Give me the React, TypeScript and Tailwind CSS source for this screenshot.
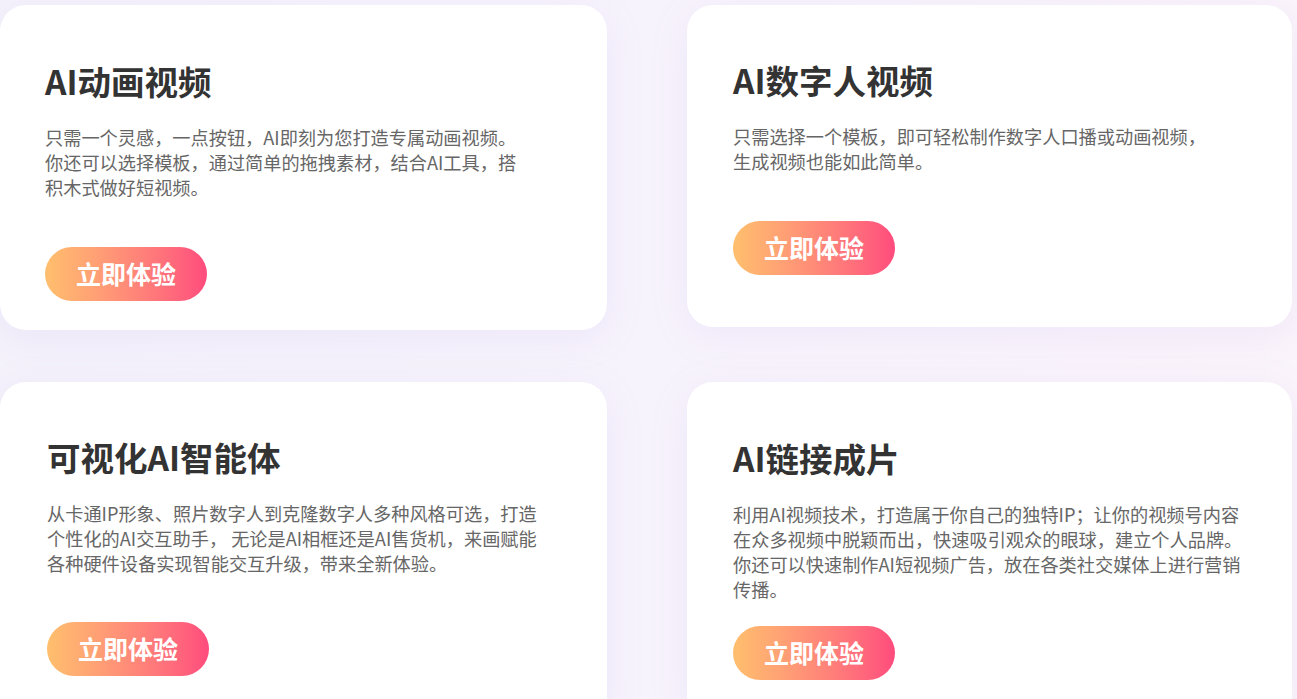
import React from 'react';

type Feature = {
  title: string;
  lines: string[];
  height: string;
  padTop: string;
  padLeft: string;
  btnGap: string;
};

const features: Feature[] = [
  {
    title: 'AI动画视频',
    lines: [
      '只需一个灵感，一点按钮，AI即刻为您打造专属动画视频。',
      '你还可以选择模板，通过简单的拖拽素材，结合AI工具，搭',
      '积木式做好短视频。',
    ],
    height: 'h-[325px]',
    padTop: 'pt-[56px]',
    padLeft: 'pl-[45px]',
    btnGap: 'mt-[47px]',
  },
  {
    title: 'AI数字人视频',
    lines: ['只需选择一个模板，即可轻松制作数字人口播或动画视频，', '生成视频也能如此简单。'],
    height: 'h-[322px]',
    padTop: 'pt-[55px]',
    padLeft: 'pl-[46px]',
    btnGap: 'mt-[47px]',
  },
  {
    title: '可视化AI智能体',
    lines: [
      '从卡通IP形象、照片数字人到克隆数字人多种风格可选，打造',
      '个性化的AI交互助手， 无论是AI相框还是AI售货机，来画赋能',
      '各种硬件设备实现智能交互升级，带来全新体验。',
    ],
    height: 'h-[340px]',
    padTop: 'pt-[55px]',
    padLeft: 'pl-[47px]',
    btnGap: 'mt-[46px]',
  },
  {
    title: 'AI链接成片',
    lines: [
      '利用AI视频技术，打造属于你自己的独特IP；让你的视频号内容',
      '在众多视频中脱颖而出，快速吸引观众的眼球，建立个人品牌。',
      '你还可以快速制作AI短视频广告，放在各类社交媒体上进行营销',
      '传播。',
    ],
    height: 'h-[340px]',
    padTop: 'pt-[56px]',
    padLeft: 'pl-[46px]',
    btnGap: 'mt-[24px]',
  },
];

function FeatureCard({ item }: { item: Feature }) {
  return (
    <div
      className={`${item.height} ${item.padTop} ${item.padLeft} bg-white rounded-[26px] shadow-[0_8px_40px_rgba(160,130,230,0.10)]`}
    >
      <h2 className="text-[33.5px] leading-[40px] font-bold text-[#333333]">{item.title}</h2>
      <p className="mt-[24px] text-[18.2px] leading-[25px] text-[#666666]">
        {item.lines.map((line, i) => (
          <span key={i} className="block whitespace-nowrap">
            {line}
          </span>
        ))}
      </p>
      <button
        className={`${item.btnGap} w-[162px] h-[54px] rounded-full bg-gradient-to-r from-[#ffbf6d] to-[#ff4b7d] text-white text-[25px] font-bold flex items-center justify-center`}
      >
        立即体验
      </button>
    </div>
  );
}

export default function App() {
  return (
    <div
      className="w-[1297px] h-[699px] overflow-hidden bg-gradient-to-r from-[#f4f2fb] via-[#f7f3fc] to-[#faf4fb]"
      style={{ fontFamily: '"Noto Sans CJK SC", "Noto Sans", sans-serif' }}
    >
      <div className="grid grid-cols-[607px_605px] gap-x-[80px] gap-y-[52px] items-start pt-[5px]">
        {features.map((f) => (
          <FeatureCard key={f.title} item={f} />
        ))}
      </div>
    </div>
  );
}
